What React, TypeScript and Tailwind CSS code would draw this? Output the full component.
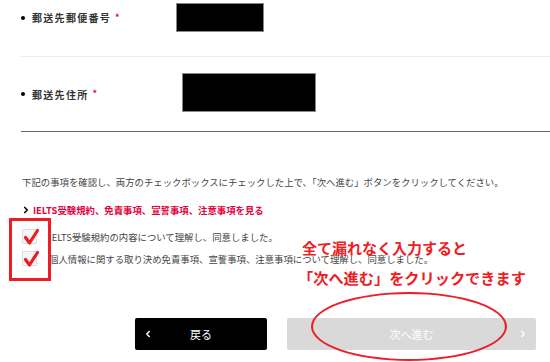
import { ChevronLeft, ChevronRight } from 'lucide-react';

const font = { fontFamily: '"Noto Sans CJK JP", "Noto Sans", sans-serif' };

function Check() {
  return (
    <svg className="absolute -left-[1px] -top-[2px]" width="18" height="18" viewBox="0 0 18 18">
      <path d="M3.5 9.5 L7.5 15 L15.5 2.5" fill="none" stroke="#ee1c25" strokeWidth="3.2" strokeLinecap="round" strokeLinejoin="round" />
    </svg>
  );
}

export default function App() {
  return (
    <div className="relative w-[550px] h-[362px] overflow-hidden bg-white text-[#333]" style={font}>
      <div className="pl-[21px]">
        <div className="flex items-center pt-[3px] pb-[24px] border-b border-[#ececec]">
          <div className="w-[155px] flex items-center text-[10px] font-bold tracking-[1.3px] text-[#333]">
            <span className="w-[4px] h-[4px] rounded-full bg-black mr-[7px]" />
            郵送先郵便番号
            <span className="text-[#e4003b] ml-[4px] text-[9px]">*</span>
          </div>
          <div className="w-[88px] h-[29px] bg-black border border-[#888]" />
        </div>
        <div className="flex items-center pt-[16px] pb-[19px] border-b border-[#666]">
          <div className="w-[161px] flex items-center text-[10px] font-bold tracking-[1.3px] text-[#333] pt-[3px]">
            <span className="w-[4px] h-[4px] rounded-full bg-black mr-[7px]" />
            郵送先住所
            <span className="text-[#e4003b] ml-[4px] text-[9px]">*</span>
          </div>
          <div className="w-[134px] h-[39px] bg-black border border-[#888]" />
        </div>
      </div>

      <div className="pl-[22px] pt-[43px] text-[9.4px] leading-[14px] text-[#444]">
        <p>下記の事項を確認し、両方のチェックボックスにチェックした上で、「次へ進む」ボタンをクリックしてください。</p>
        <div className="mt-[14px] flex items-center text-[#e4003b] font-bold">
          <ChevronRight className="w-[10px] h-[10px] text-black mr-[2px] -ml-[1px]" strokeWidth={4} />
          IELTS受験規約、免責事項、宣誓事項、注意事項を見る
        </div>
        <div className="mt-[11px] flex items-center">
          <span className="relative w-[15px] h-[15px] border border-[#ddd] bg-[#f6f6f6] rounded-[1px] mr-[12px]">
            <Check />
          </span>
          <span className="pt-[2px]">IELTS受験規約の内容について理解し、同意しました。</span>
        </div>
        <div className="mt-[7px] flex items-center">
          <span className="relative w-[15px] h-[15px] border border-[#ddd] bg-[#f6f6f6] rounded-[1px] mr-[12px]">
            <Check />
          </span>
          <span className="pt-[1px]">個人情報に関する取り決め免責事項、宣誓事項、注意事項について理解し、同意しました。</span>
        </div>
      </div>

      <div className="flex pl-[135px] pt-[52px] gap-[20px]">
        <button className="relative w-[132px] h-[32px] bg-black rounded-[2px] text-white text-[11px] flex items-center justify-center">
          <ChevronLeft className="absolute left-[8px] w-[10px] h-[10px]" strokeWidth={3.5} />
          戻る
        </button>
        <button className="relative w-[249px] h-[32px] bg-[#d9d9d9] rounded-[2px] text-white text-[11px] flex items-center justify-center">
          次へ進む
          <ChevronRight className="absolute right-[8px] w-[10px] h-[10px]" strokeWidth={3.5} />
        </button>
      </div>

      <div className="absolute left-[9px] top-[218px] w-[42px] h-[63px] border-[3px] border-[#ee1c25]" />
      <div className="absolute left-[302px] top-[237px] text-[15px] leading-[22px] font-bold text-[#ee1c25] whitespace-nowrap">
        全て漏れなく入力すると
      </div>
      <div className="absolute left-[298px] top-[266px] text-[15.2px] leading-[22px] font-bold text-[#ee1c25] whitespace-nowrap">
        「次へ進む」をクリックできます
      </div>
      <div className="absolute left-[311px] top-[292px] w-[196px] h-[69px] rounded-[50%] border-[2.5px] border-[#ee1c25]" />
    </div>
  );
}
